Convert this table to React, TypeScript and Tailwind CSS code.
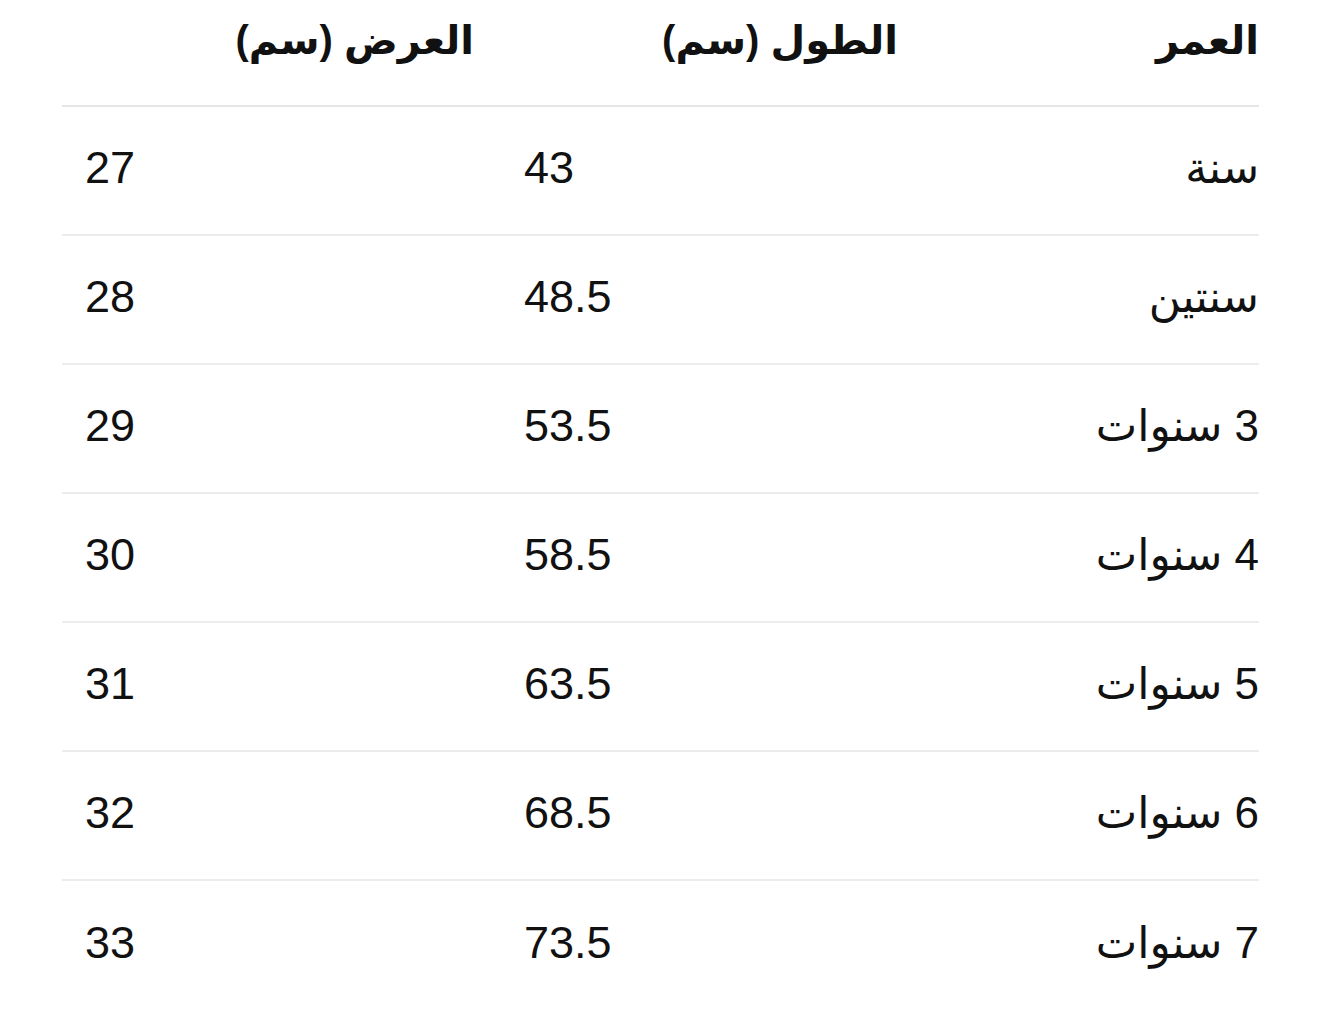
const rows = [
  { age: 'سنة', length: '43', width: '27' },
  { age: 'سنتين', length: '48.5', width: '28' },
  { age: '3 سنوات', length: '53.5', width: '29' },
  { age: '4 سنوات', length: '58.5', width: '30' },
  { age: '5 سنوات', length: '63.5', width: '31' },
  { age: '6 سنوات', length: '68.5', width: '32' },
  { age: '7 سنوات', length: '73.5', width: '33' },
]

export default function App() {
  return (
    <div
      className="min-h-screen bg-white px-[61px] text-[#111]"
      style={{ fontFamily: '"Liberation Sans", "DejaVu Sans", "Noto Sans", sans-serif' }}
    >
      <div dir="rtl" className="grid grid-cols-[337px_424px_436px]">
        {/* Header */}
        <div className="h-[107px] border-b-2 border-[#e6e6e6] pt-[12px] text-right text-[40px] font-bold leading-[56px]">
          العمر
        </div>
        <div className="h-[107px] border-b-2 border-[#e6e6e6] pr-[24px] pt-[12px] text-right text-[40px] font-bold leading-[56px]">
          الطول (سم)
        </div>
        <div className="h-[107px] border-b-2 border-[#e6e6e6] pr-[24px] pt-[12px] text-right text-[40px] font-bold leading-[56px]">
          العرض (سم)
        </div>

        {/* Rows */}
        {rows.map((r, i) => {
          const last = i === rows.length - 1
          const cell = `flex h-[129px] items-center pb-[5px] ${last ? '' : 'border-b-2 border-[#ececec]'}`
          return (
            <div key={r.age} className="contents">
              <div className={`${cell} justify-start text-[44px]`}>{r.age}</div>
              <div dir="ltr" className={`${cell} justify-start pl-[26px] text-[45px]`}>
                {r.length}
              </div>
              <div dir="ltr" className={`${cell} justify-start pl-[23px] text-[45px]`}>
                {r.width}
              </div>
            </div>
          )
        })}
      </div>
    </div>
  )
}
